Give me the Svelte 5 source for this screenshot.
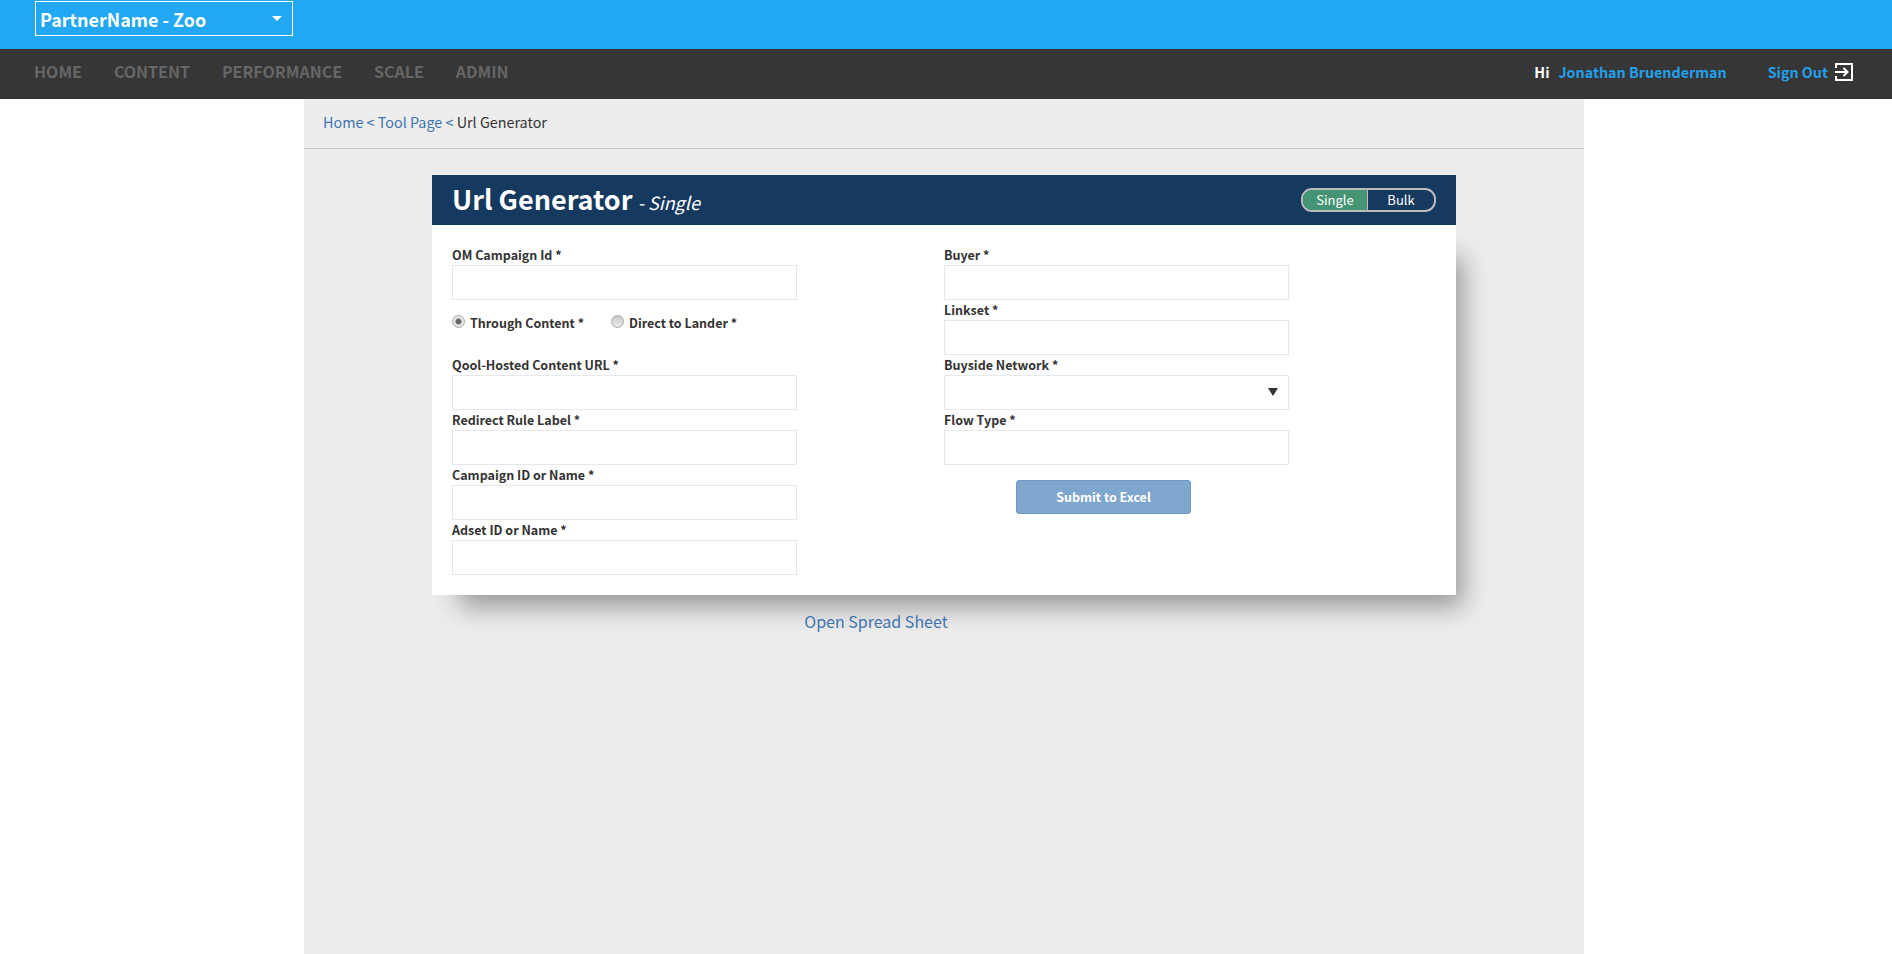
<script>
  const navItems = ['Home', 'Content', 'Performance', 'Scale', 'Admin'];
  const leftFields = ['Qool-Hosted Content URL *', 'Redirect Rule Label *', 'Campaign ID or Name *', 'Adset ID or Name *'];

  let mode = 'single';
  let route = 'content';
</script>

<div class="page">
  <header class="partner-bar">
    <div class="partner-select">
      <select aria-label="Partner">
        <option>PartnerName - Zoo</option>
      </select>
    </div>
  </header>

  <nav class="main-nav">
    <ul>
      {#each navItems as item}
        <li><a href="#top">{item}</a></li>
      {/each}
    </ul>
    <div class="user">
      <span class="hi">Hi</span>
      <a class="name" href="#top">Jonathan Bruenderman</a>
      <a class="sign-out" href="#top">
        Sign Out
        <svg width="20" height="20" viewBox="0 0 20 20" fill="none" stroke="#fff" stroke-width="2">
          <path d="M2 6V2H18V18H2V14" />
          <path d="M1 10H13M9.5 6L13.5 10L9.5 14" />
        </svg>
      </a>
    </div>
  </nav>

  <main class="content">
    <div class="breadcrumb">
      <a href="#top">Home</a> <span>&lt;</span> <a href="#top">Tool Page</a> <span>&lt;</span> Url Generator
    </div>

    <section class="card">
      <div class="card-head">
        <h1>Url Generator <small>- Single</small></h1>
        <div class="toggle">
          <button class:on={mode === 'single'} on:click={() => (mode = 'single')}>Single</button>
          <button class:on={mode === 'bulk'} on:click={() => (mode = 'bulk')}>Bulk</button>
        </div>
      </div>

      <form class="card-body" on:submit|preventDefault>
        <div class="col">
          <label class="field">
            <span>OM Campaign Id *</span>
            <input type="text" />
          </label>
          <div class="radios">
            <label><input type="radio" bind:group={route} value="content" /> Through Content *</label>
            <label><input type="radio" bind:group={route} value="lander" /> Direct to Lander *</label>
          </div>
          {#each leftFields as label}
            <label class="field">
              <span>{label}</span>
              <input type="text" />
            </label>
          {/each}
        </div>

        <div class="col">
          <label class="field">
            <span>Buyer *</span>
            <input type="text" />
          </label>
          <label class="field">
            <span>Linkset *</span>
            <input type="text" />
          </label>
          <label class="field">
            <span>Buyside Network *</span>
            <div class="select-wrap">
              <select></select>
            </div>
          </label>
          <label class="field">
            <span>Flow Type *</span>
            <input type="text" />
          </label>
          <button class="submit" type="submit">Submit to Excel</button>
        </div>
      </form>
    </section>

    <div class="sheet-link"><a href="#top">Open Spread Sheet</a></div>
  </main>
</div>

<style>
  :global(body) {
    background: #fff;
    font-family: "Noto Sans CJK SC", "Open Sans", sans-serif;
    color: #333;
  }

  a {
    text-decoration: none;
  }

  .page {
    display: flex;
    flex-direction: column;
    height: 954px;
    overflow: hidden;
  }

  /* top bar */
  .partner-bar {
    flex: none;
    height: 49px;
    padding: 1px 0 0 35px;
    box-sizing: border-box;
    background: #22a7f3;
  }

  .partner-select {
    position: relative;
    width: 258px;
    height: 35px;
    box-sizing: border-box;
    border: 1px solid #fff;
  }

  .partner-select::after {
    content: '';
    position: absolute;
    top: 14px;
    right: 10px;
    border-left: 5px solid transparent;
    border-right: 5px solid transparent;
    border-top: 5px solid #fff;
  }

  .partner-select select {
    width: 100%;
    height: 33px;
    padding: 2px 0 0 4px;
    border: 0;
    background: transparent;
    color: #fff;
    font: bold 17.9px/31px "Noto Sans CJK SC", sans-serif;
    appearance: none;
    outline: none;
  }

  .partner-select option {
    color: #333;
  }

  /* nav */
  .main-nav {
    flex: none;
    display: flex;
    align-items: center;
    justify-content: space-between;
    height: 50px;
    padding: 0 38px 4px 34px;
    box-sizing: border-box;
    background: #363636;
  }

  .main-nav ul {
    display: flex;
    gap: 32px;
    margin: -2px 0 0;
    padding: 0;
    list-style: none;
  }

  .main-nav li a {
    color: #666;
    font-size: 16px;
    font-weight: 700;
    line-height: 24px;
    text-transform: uppercase;
  }

  .user {
    display: flex;
    align-items: center;
    font-size: 14.3px;
    font-weight: 700;
    line-height: 22px;
  }

  .hi {
    color: #fff;
    margin-right: 9px;
  }

  .name,
  .sign-out {
    color: #22a0ec;
  }

  .sign-out {
    display: flex;
    align-items: center;
    gap: 6px;
    margin-left: 41px;
  }

  /* content column */
  .content {
    flex: 1;
    width: 1280px;
    margin-left: 304px;
    background: #ededed;
  }

  .breadcrumb {
    height: 49px;
    padding: 0 19px;
    border-bottom: 1px solid #c9c9c9;
    color: #333;
    font-size: 14.35px;
    line-height: 46px;
  }

  .breadcrumb a,
  .breadcrumb span {
    color: #3f74ae;
  }

  .card {
    width: 1024px;
    margin: 26px 0 0 128px;
  }

  .card-head {
    position: relative;
    z-index: 1;
    display: flex;
    align-items: center;
    justify-content: space-between;
    height: 50px;
    padding: 0 20px;
    background: #16395f;
    color: #fff;
  }

  h1 {
    margin: 0;
    font-size: 27px;
    font-weight: 700;
    line-height: 50px;
  }

  h1 small {
    margin-left: -1px;
    font-size: 18px;
    font-weight: 400;
    font-style: italic;
  }

  .toggle {
    display: flex;
    width: 135px;
    height: 24px;
    box-sizing: border-box;
    overflow: hidden;
    border: 2px solid #bcbcbc;
    border-radius: 11px;
  }

  .toggle button {
    flex: 1;
    padding: 0;
    border: 0;
    background: transparent;
    color: #fff;
    font: 13px/20px "Noto Sans CJK SC", sans-serif;
  }

  .toggle button:first-child {
    flex: none;
    width: 65px;
    border-right: 1px solid #bcbcbc;
  }

  .toggle button.on {
    background: #459473;
  }

  .card-body {
    display: grid;
    grid-template-columns: 492px 1fr;
    height: 370px;
    padding: 20px 20px 0;
    box-sizing: border-box;
    background: #fff;
    box-shadow: 17px 22px 25px -10px rgba(0, 0, 0, 0.36);
  }

  .col {
    width: 345px;
  }

  .field {
    display: block;
  }

  .field > span {
    display: block;
    height: 20px;
    font-size: 12.5px;
    font-weight: 700;
    line-height: 20px;
  }

  input[type='text'],
  .select-wrap select {
    display: block;
    width: 100%;
    height: 35px;
    box-sizing: border-box;
    border: 1px solid #e6e8ec;
    border-radius: 0;
    background: #fff;
    outline: none;
    appearance: none;
  }

  .select-wrap {
    position: relative;
  }

  .select-wrap::after {
    content: '';
    position: absolute;
    top: 13px;
    right: 11px;
    border-left: 5px solid transparent;
    border-right: 5px solid transparent;
    border-top: 8px solid #333;
  }

  .radios {
    display: flex;
    gap: 27px;
    height: 55px;
    padding-top: 13px;
    box-sizing: border-box;
    font-size: 12.5px;
    font-weight: 700;
    line-height: 20px;
  }

  .radios label {
    display: flex;
    align-items: center;
    align-self: flex-start;
    gap: 5px;
    white-space: nowrap;
  }

  .radios input {
    position: relative;
    top: -2px;
    width: 13px;
    height: 13px;
    margin: 0;
    box-sizing: border-box;
    border: 1px solid #a8a8a8;
    border-radius: 50%;
    background: linear-gradient(#c8c8c8, #ececec);
    appearance: none;
  }

  .radios input:checked {
    background: radial-gradient(circle, #666 0 2.5px, #e6e6e6 3.5px);
  }

  .submit {
    display: block;
    width: 175px;
    height: 34px;
    margin: 15px 0 0 72px;
    padding: 0;
    border: 1px solid #7098c2;
    border-radius: 3px;
    background: #7fa6cd;
    color: #fff;
    font: bold 12.5px/20px "Noto Sans CJK SC", sans-serif;
  }

  .sheet-link {
    width: 888px;
    margin: 14px 0 0 128px;
    text-align: center;
    font-size: 16px;
    line-height: 24px;
  }

  .sheet-link a {
    color: #3f74ae;
  }
</style>
